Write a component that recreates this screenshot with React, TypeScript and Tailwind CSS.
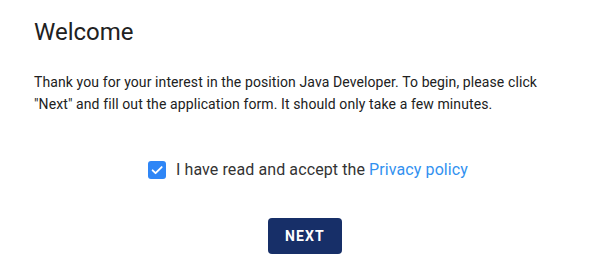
import React from "react";

export default function App() {
  return (
    <div className="w-[602px] h-[269px] bg-white font-['Roboto',sans-serif] text-[#212121] pl-[34px] pr-[26px] pt-[17px]">
      <h1 className="text-[24px] leading-[30px] text-[#212121]">Welcome</h1>
      <p className="mt-[24px] text-[14px] leading-[22px] tracking-[0.1px] text-[#212121] w-[530px]">
        Thank you for your interest in the position Java Developer. To begin, please click "Next" and fill out the application form. It should only take a few minutes.
      </p>
      <div className="mt-[45px] flex justify-center items-center gap-[10px] pl-[6px]">
        <span className="w-[18px] h-[18px] rounded-[3px] bg-[#2f86f6] flex items-center justify-center">
          <svg width="14" height="14" viewBox="0 0 24 24" fill="none" stroke="white" strokeWidth="3.2" strokeLinecap="round" strokeLinejoin="round">
            <path d="M4.5 12.5l5 5L20 7" />
          </svg>
        </span>
        <span className="text-[16px] leading-[20px] tracking-[0.1px] text-[#333]">
          I have read and accept the <span className="text-[#3291f0]">Privacy policy</span>
        </span>
      </div>
      <div className="mt-[38px] flex justify-center">
        <button className="w-[74px] h-[36px] rounded-[4px] bg-[#172f68] text-white text-[14px] font-bold tracking-[0.08em]">
          NEXT
        </button>
      </div>
    </div>
  );
}
